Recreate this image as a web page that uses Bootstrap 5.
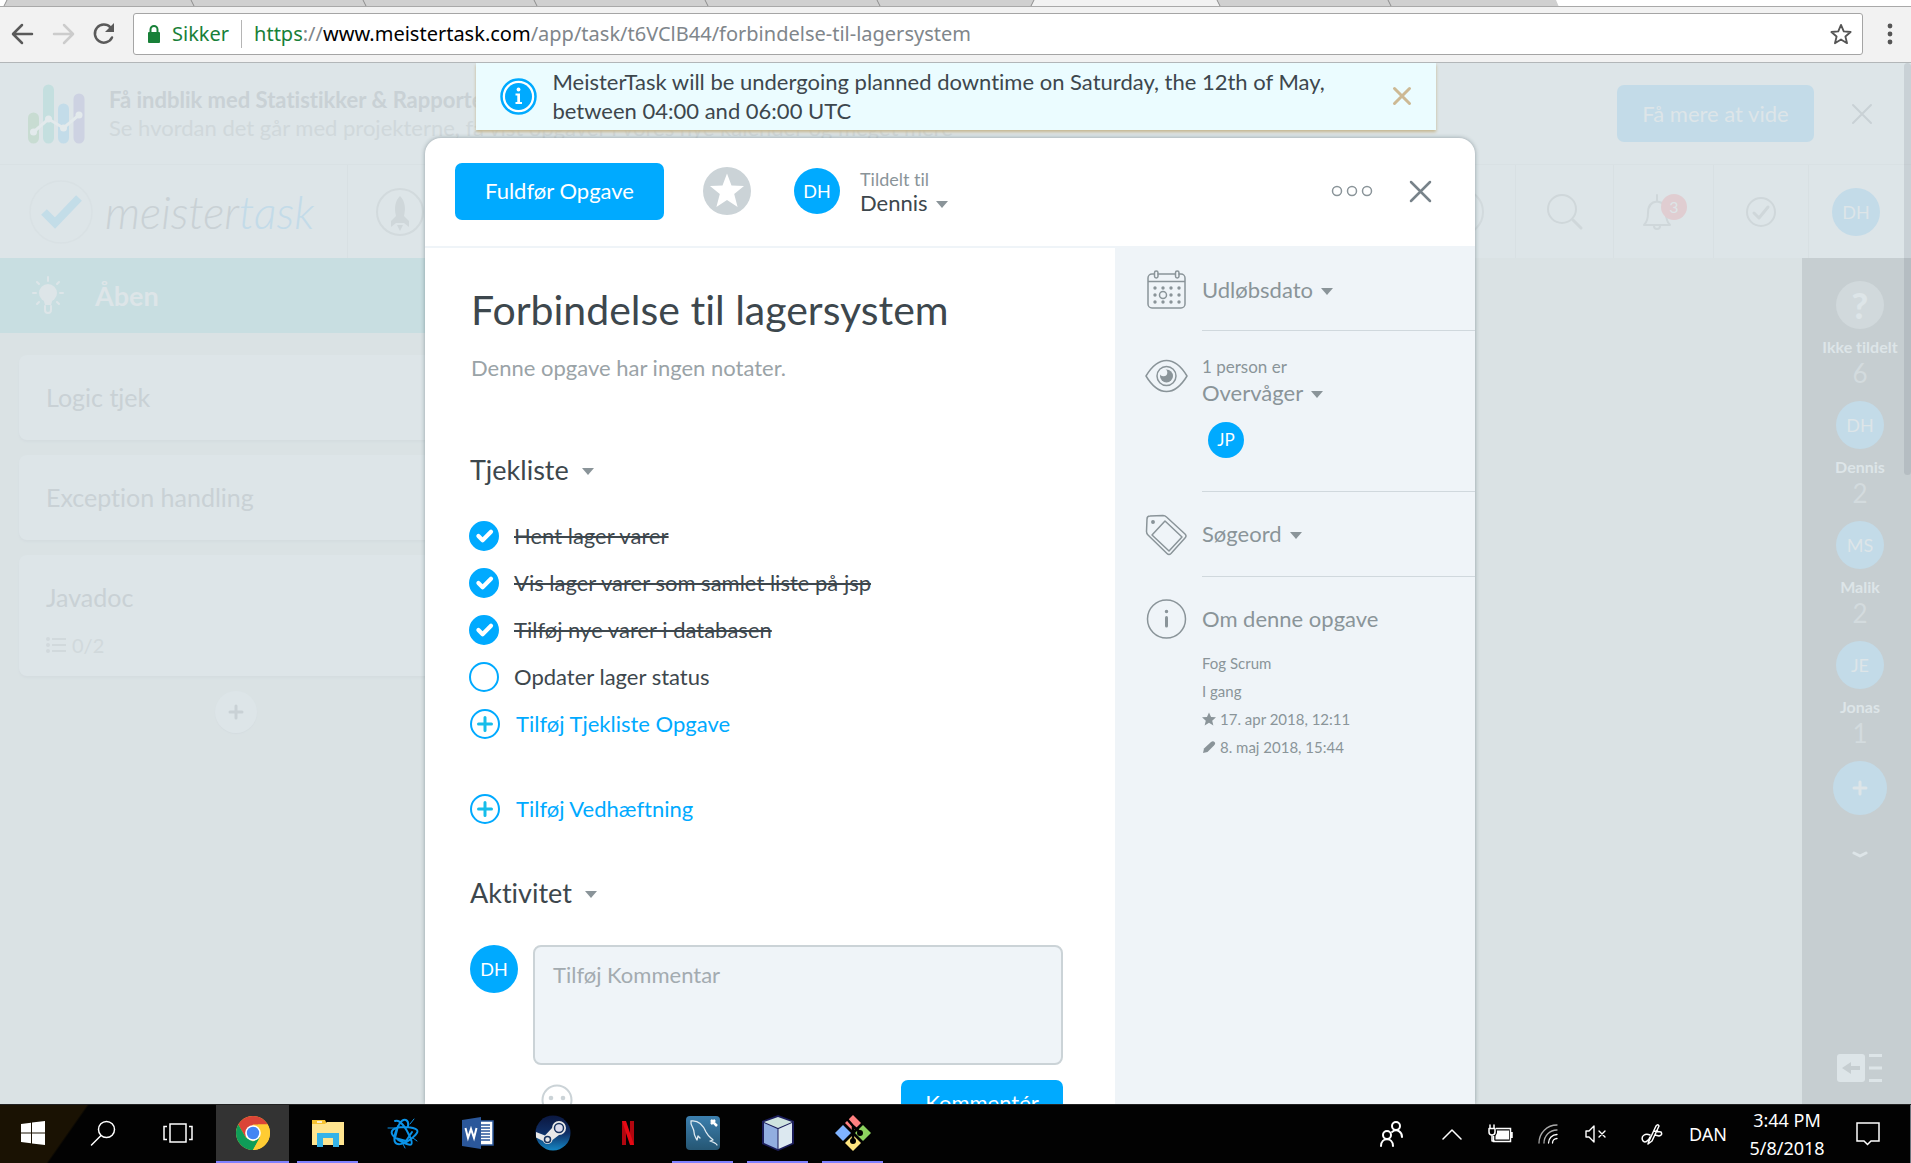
<!DOCTYPE html>
<html lang="da">
<head>
<meta charset="utf-8">
<meta name="viewport" content="width=device-width, initial-scale=1">
<title>Forbindelse til lagersystem - MeisterTask</title>
<link rel="stylesheet" href="https://cdn.jsdelivr.net/npm/bootstrap@5.3.0/dist/css/bootstrap.min.css">
<style>
:root { --blue: #00aaff; --ink: #3d474d; --mute: #8a9499; --soft: #eff4f8; --veil: #dde5e8; --ghost: #c9d1d5; --ghostblue: #c3dbe8; }
body { font-family: Lato, "Open Sans", sans-serif; font-variant-ligatures: none; color: var(--ink); font-size: 22px; line-height: 30px; }
button { font-family: inherit; }
.plain { background: none; border: 0; padding: 0; color: inherit; line-height: inherit; text-align: left; }
svg { display: block; flex: none; }
.ln { fill: none; stroke: currentColor; stroke-linecap: round; stroke-linejoin: round; }
.avatar { width: 48px; height: 48px; border-radius: 50%; background: var(--blue); color: #fff; display: flex; align-items: center; justify-content: center; flex: none; font-size: 18px; line-height: 24px; }

/* browser */
.tabstrip { height: 7px; background: #fff; border-bottom: 1px solid #a9a9a9; overflow: hidden; }
.tabstrip svg { width: 1560px; height: 7px; }
.toolbar { height: 55px; background: #f2f2f2; padding: 6px 15px 7px 10px; color: #5a5a5a; gap: 17px; }
.address { height: 42px; border: 1px solid #a5a5a5; border-radius: 3px; background: #fff; font-family: "Noto Sans", "Open Sans", sans-serif; font-size: 20px; color: #80868b; padding: 0 10px 0 14px; white-space: nowrap; }
.address .ok { color: #188038; }
.address .lock { margin-right: 12px; }
.address .pipe { width: 1px; height: 28px; background: #b5b5b5; margin: 0 12px; }

/* stage */
.stage { background: #dae2e4; border-top: 1px solid #b2b6b8; color: var(--ghost); }
.promo { height: 102px; background: var(--veil); border-bottom: 1px solid #d9e1e4; padding: 0 38px 0 28px; line-height: 28px; }
.promo .more { width: 197px; height: 57px; background: var(--ghostblue); color: var(--veil); border: 0; border-radius: 7px; margin-right: 37px; }
.promo .sub { color: #d0d8db; }
.apphead { height: 93px; background: var(--veil); color: #cfd7da; }
.wordmark { font-size: 45px; font-weight: 300; font-style: italic; line-height: 60px; width: 253px; padding-left: 11px; color: var(--ghost); }
.wordmark em { color: var(--ghostblue); }
.cell { height: 93px; border-left: 1px solid #d8e0e3; display: flex; align-items: center; justify-content: center; }
.colhead { height: 75px; width: 473px; background: #c8dee1; color: var(--veil); font-size: 27px; font-weight: 700; padding-left: 32px; gap: 30px; }
.lane { width: 472px; padding: 22px 19px; }
.task { background: #dde5e8; border-radius: 8px; box-shadow: 0 2px 2px #d5dde0; padding: 27px 27px 28px; margin-bottom: 15px; font-size: 25px; }
.task .meta { font-size: 20px; margin-top: 18px; color: #d1d9dc; }
.task.tall { padding-bottom: 16px; }
.addtask { width: 42px; height: 42px; border-radius: 50%; background: var(--veil); box-shadow: 0 1px 1px #d5dde0; }
.people { width: 109px; background: #c6ced1; color: var(--veil); padding: 23px 0 22px 7px; font-size: 16px; line-height: 26px; }
.people .avatar { background: var(--ghostblue); color: var(--veil); margin-bottom: 5px; }
.people .who { margin-bottom: 15px; }
.people .num { font-size: 26px; color: #d3dbde; }
.people .avatar.none { background: #d1d9dc; font-size: 36px; font-weight: 900; }
.people .avatar.big { width: 54px; height: 54px; }
.thumb { position: absolute; right: 0; top: 0; width: 7px; height: 412px; border-radius: 5px; background: rgba(70,80,90,.13); }

/* dialog */
.veil { position: absolute; inset: 0; padding: 75px 11px 0 0; display: flex; justify-content: center; }
.sheet { width: 1050px; background: #fff; border-radius: 16px 16px 0 0; box-shadow: 0 0 4px rgba(50,70,80,.45); color: var(--ink); overflow: hidden; align-self: stretch; }
.sheethead { height: 110px; border-bottom: 2px solid var(--soft); padding: 0 43px 2px 30px; }
.sheethead .avatar { width: 46px; height: 46px; }
.sheethead .fav { margin: 0 43px 0 39px; }
.sheethead .dots { color: var(--mute); margin-right: 36px; }
.sheethead .x { color: #78838a; }
.go { background: var(--blue); color: #fff; border: 0; border-radius: 7px; height: 57px; width: 209px; flex: none; }
.tiny { font-size: 18px; line-height: 23px; color: var(--mute); }
.who-line { line-height: 23px; display: block; }
.caret { display: inline-block; border: 6px solid transparent; border-top: 7px solid var(--mute); border-bottom: 0; margin-left: 8px; vertical-align: 3px; }
.left { padding: 38px 52px 0 44px; }
.left h1 { font-size: 41px; line-height: 48px; margin: 0 0 19px 2px; font-weight: 400; }
.note { color: #9aa3a7; margin: 0 0 72px 2px; }
.left h2 { font-size: 27px; line-height: 30px; margin: 0 0 0 1px; font-weight: 400; }
.left h2 .caret { margin-left: 13px; vertical-align: 5px; }
.checks { margin: 27px 0 0; }
.checks li { height: 47px; display: flex; align-items: center; }
.checks input.form-check-input { width: 30px; height: 30px; margin: 0 15px 0 0; border: 2px solid var(--blue); border-radius: 50%; background-size: 28px; background-position: center; }
.checks input:checked { background-color: var(--blue); }
.checks input:checked + label { text-decoration: line-through; text-decoration-thickness: 2px; }
.addrow { height: 48px; color: var(--blue); display: flex; align-items: center; gap: 16px; text-decoration: none; }
.attach { margin: 37px 0 45px; }
.comment { margin: 37px 0 0 1px; gap: 15px; }
.comment textarea { display: block; width: 100%; height: 120px; resize: none; border: 2px solid #cbd3d7; border-radius: 8px; background: var(--soft); padding: 13px 18px; line-height: 30px; }
.comment textarea::placeholder { color: #a3abb0; opacity: 1; }
.comment .tools { padding-top: 15px; }
.comment .go { width: 162px; height: 46px; }
.side { width: 360px; flex: none; background: var(--soft); margin-top: -2px; padding-top: 2px; color: var(--mute); }
.sec { display: flex; }
.sec .ico { width: 87px; padding: 22px 0 0 30px; flex: none; }
.sec .body { flex: 1; border-bottom: 1px solid #d0d8dd; padding: 27px 0; }
.sec.first .body { padding-bottom: 25px; }
.sec.watch .ico { padding-top: 28px; }
.sec.watch .body { padding: 23px 0 0; line-height: 26px; }
.sec.watch .tiny { font-size: 17px; line-height: 26px; }
.sec.last .body { border: 0; }
.about { font-size: 15px; line-height: 28px; margin-top: 15px; }
.side .avatar { width: 36px; height: 36px; font-size: 17px; margin: 16px 0 33px 6px; }

/* notification */
.notice { position: absolute; top: 0; left: 50%; transform: translateX(-50%); width: 960px; background: #ebfcff; color: var(--ink); box-shadow: 0 2px 3px #c5b68f; padding: 4px 24px 5px; line-height: 29px; gap: 16px; }
.notice .txt { width: 790px; }
.notice .x { color: #cdb994; }

/* taskbar */
.taskbar { height: 59px; background: linear-gradient(125deg, #1a1203 71px, #020202 73px); border-top: 1px solid #222; color: #fff; font-family: "Noto Sans", "Open Sans", sans-serif; font-size: 18px; line-height: 28px; }
.tb { width: 75px; padding: 0 7px; height: 58px; border: 0; background: none; color: #fff; }
.tb > span { height: 58px; display: flex; align-items: center; justify-content: center; border-bottom: 2px solid transparent; }
.tb.open > span { border-color: #8080ff; }
.tb.now { padding: 0 1px; }
.tb.now > span { background: #333; }
.tb.w-a { width: 65px; padding: 0; } .tb.w-b { width: 74px; padding: 0; } .tb.w-c { width: 76px; padding: 0; }
.tray { display: flex; align-items: center; justify-content: center; flex: none; height: 58px; }
.t-s { width: 36px; } .t-m { width: 60px; } .t-l { width: 76px; } .t-clock { width: 122px; }
.t-note { width: 40px; margin-right: 22px; }
</style>
<script src="https://cdn.jsdelivr.net/npm/bootstrap@5.3.0/dist/js/bootstrap.bundle.min.js"></script>
</head>
<body class="vh-100 overflow-hidden d-flex flex-column">

<header class="flex-shrink-0">
  <div class="tabstrip">
    <svg viewBox="0 0 1560 7">
      <path fill="#d0d0d0" d="M7 0H1034L1031 7H4zM1217 0H1556L1559 7H1220z"/>
      <path fill="#f2f2f2" d="M1034 0H1217L1220 7H1031z"/>
      <path fill="none" stroke="#8d8d8d" d="M7 0L4 6M191 0L194 6M363 0L366 6M534 0L537 6M705 0L708 6M877 0L880 6M1034 0L1031 6M1217 0L1220 6M1388 0L1391 6"/>
    </svg>
  </div>
  <div class="toolbar d-flex align-items-center">
    <button class="plain" aria-label="Tilbage"><svg width="24" height="24" viewBox="0 0 24 24" class="ln" stroke-width="2.5"><path d="M22 12H4M12 3L3 12L12 21"/></svg></button>
    <button class="plain" aria-label="Frem" style="color:#ccc"><svg width="24" height="24" viewBox="0 0 24 24" class="ln" stroke-width="2.5"><path d="M3 12H21M13 3L22 12L13 21"/></svg></button>
    <button class="plain" aria-label="Opdater"><svg width="24" height="24" viewBox="0 0 24 24"><path class="ln" stroke-width="2.5" d="M20 15.500A9 9 0 1 1 18.500 5.500"/><path fill="currentColor" d="M22 1V10H13z"/></svg></button>
    <div class="address d-flex align-items-center flex-grow-1">
      <svg class="lock" width="12" height="18" viewBox="0 0 12 18"><rect y="7" width="12" height="11" rx="1" fill="#188038"/><path d="M2.500 8V4.500a3.500 3.500 0 0 1 7 0V8" fill="none" stroke="#188038" stroke-width="2"/></svg>
      <span class="ok">Sikker</span><span class="pipe"></span>
      <span class="flex-grow-1"><span class="ok">https</span>://<span class="text-black">www.meistertask.com</span>/app/task/t6VClB44/forbindelse-til-lagersystem</span>
      <button class="plain" aria-label="Bogmærk"><svg width="22" height="22" viewBox="0 0 24 24" class="ln" stroke-width="2" style="color:#555"><path d="M12 2L15 9.200L22.500 9.800L16.800 14.700L18.600 22L12 18L5.400 22L7.200 14.700L1.500 9.800L9 9.200z"/></svg></button>
    </div>
    <button class="plain" aria-label="Menu"><svg width="16" height="24" viewBox="0 0 16 24" fill="#555"><circle cx="10" cy="4" r="2.400"/><circle cx="10" cy="12" r="2.400"/><circle cx="10" cy="20" r="2.400"/></svg></button>
  </div>
</header>

<div class="stage flex-grow-1 position-relative overflow-hidden d-flex flex-column">
  <div class="promo d-flex align-items-center flex-shrink-0">
    <svg width="57" height="60" viewBox="0 0 57 60"><g stroke-width="11" stroke-linecap="round"><path stroke="#c8dcd2" d="M5.500 34V54"/><path stroke="#c4dfdf" d="M20.500 6V54"/><path stroke="#c3dce9" d="M35.500 25V54"/><path stroke="#cdd2e2" d="M51 15V54"/></g><path fill="none" stroke="#e3eaec" stroke-width="3" d="M5.500 48L20.500 35L35.500 44L51 31"/><g fill="#e3eaec"><circle cx="5.500" cy="48" r="3.500"/><circle cx="20.500" cy="35" r="3.500"/><circle cx="35.500" cy="44" r="3.500"/><circle cx="51" cy="31" r="3.500"/></g></svg>
    <div class="ms-4 flex-grow-1 text-nowrap"><b>Få indblik med Statistikker &amp; Rapporter</b><br><span class="sub">Se hvordan det går med projekterne, få vist opgaver i vores nye kalender og meget mere</span></div>
    <button class="more">Få mere at vide</button>
    <button class="plain" aria-label="Luk banner"><svg width="22" height="22" viewBox="0 0 22 22" class="ln" stroke-width="2"><path d="M2 2L20 20M20 2L2 20"/></svg></button>
  </div>

  <div class="apphead d-flex align-items-center flex-shrink-0">
    <svg class="ms-4" width="70" height="80" viewBox="0 0 70 80"><circle cx="37" cy="40" r="31" fill="none" stroke="#d9e1e4" stroke-width="1.500"/><path fill="none" stroke="#c3dde8" stroke-width="8" d="M20 40L31 51L55 26"/></svg>
    <span class="wordmark">meister<em>task</em></span>
    <div class="cell px-4 justify-content-start flex-grow-1"><svg width="56" height="48" viewBox="0 0 56 48"><circle cx="28" cy="24" r="23" fill="none" stroke="#d2dadd" stroke-width="2"/><path fill="#cfd7da" d="M28 8c5 5 6 12 4 20l5 5v6l-5-4h-8l-5 4v-6l5-5c-2-8-1-15 4-20zM25 37h6l-3 6z"/></svg></div>
    <svg width="50" height="50" viewBox="0 0 50 50" class="me-4"><circle cx="19" cy="25" r="23" fill="none" stroke="#d2dadd" stroke-width="2"/></svg>
    <div class="cell" style="width:98px"><svg width="38" height="38" viewBox="0 0 38 38" class="ln" stroke-width="2"><circle cx="16" cy="16" r="14"/><path stroke-width="3" d="M27 27L35 35"/></svg></div>
    <div class="cell" style="width:100px"><svg width="46" height="40" viewBox="0 0 46 40"><path class="ln" stroke-width="2" d="M3 33H29C26 30 25 27 25 21C25 14 22 10 16 9.500C10 10 7 14 7 21C7 27 6 30 3 33zM16 9V3M13 34a3 3 0 0 0 6 0"/><circle cx="33" cy="15" r="13" fill="#e0cdd1"/><text x="33" y="21" font-size="16" text-anchor="middle" fill="#dde5e8">3</text></svg></div>
    <div class="cell" style="width:95px"><svg width="32" height="32" viewBox="0 0 32 32" class="ln" stroke-width="2"><circle cx="16" cy="16" r="14"/><path stroke-width="3" d="M9 17L14 22L23 11"/></svg></div>
    <div class="cell" style="width:103px"><span class="avatar me-2" style="background:var(--ghostblue);color:var(--veil)">DH</span></div>
  </div>

  <div class="d-flex flex-grow-1">
    <main class="flex-grow-1">
      <div class="colhead d-flex align-items-center">
        <svg width="33" height="40" viewBox="0 0 33 40"><circle cx="16" cy="17" r="9" fill="currentColor"/><path fill="currentColor" d="M11 22h10l-2 7h-6z"/><path class="ln" stroke-width="2" d="M13 30V34a3 3 0 0 0 6 0V30M16 1V5M1 17H4M28 17H31M5 6L7 8M27 6L25 8M5 28L7 26M27 28L25 26"/></svg>
        <span>Åben</span>
      </div>
      <div class="lane">
        <div class="task">Logic tjek</div>
        <div class="task">Exception handling</div>
        <div class="task tall">Javadoc
          <div class="meta d-flex align-items-center"><svg class="me-1" width="22" height="18" viewBox="0 0 22 18" fill="currentColor"><circle cx="2" cy="3" r="2"/><circle cx="2" cy="9" r="2"/><circle cx="2" cy="15" r="2"/><path d="M6 2H20V4H6zM6 8H20V10H6zM6 14H20V16H6z"/></svg>0/2</div>
        </div>
        <button class="plain addtask mx-auto d-flex align-items-center justify-content-center" aria-label="Ny opgave"><svg width="16" height="16" viewBox="0 0 16 16" class="ln" stroke-width="3"><path d="M8 2V14M2 8H14"/></svg></button>
      </div>
    </main>
    <aside class="people d-flex flex-column align-items-center">
      <div class="who d-flex flex-column align-items-center"><span class="avatar none">?</span><b>Ikke tildelt</b><span class="num">6</span></div>
      <div class="who d-flex flex-column align-items-center"><span class="avatar">DH</span><b>Dennis</b><span class="num">2</span></div>
      <div class="who d-flex flex-column align-items-center"><span class="avatar">MS</span><b>Malik</b><span class="num">2</span></div>
      <div class="who d-flex flex-column align-items-center"><span class="avatar">JE</span><b>Jonas</b><span class="num">1</span></div>
      <button class="plain avatar big" aria-label="Tilføj medlem"><svg width="16" height="16" viewBox="0 0 16 16" class="ln" stroke-width="3"><path d="M8 2V14M2 8H14"/></svg></button>
      <svg class="mt-4" width="16" height="20" viewBox="0 0 16 20"><path class="ln" stroke-width="3" d="M2 9L8 12L14 9"/></svg>
      <svg class="mt-auto" width="46" height="28" viewBox="0 0 46 28" fill="currentColor"><rect width="28" height="28" rx="3"/><path d="M32 0H45V3H32zM32 12.500H45V15.500H32zM32 25H45V28H32z"/><path fill="#c6ced1" d="M5 14L14 8V12H23V16H14V20z"/></svg>
    </aside>
  </div>
  <div class="thumb"></div>

  <div class="veil">
    <section class="sheet d-flex flex-column" role="dialog" aria-label="Opgave">
      <div class="sheethead d-flex align-items-center flex-shrink-0">
        <button class="go">Fuldfør Opgave</button>
        <button class="plain fav" aria-label="Favorit"><svg width="48" height="48" viewBox="0 0 48 48"><circle cx="24" cy="24" r="24" fill="#cbd3d7"/><path fill="#fff" d="M24 6.500L28.500 18.500L41 19L31.200 27L34.600 40L24 33L13.400 40L16.800 27L7 19L19.500 18.500z"/></svg></button>
        <span class="avatar">DH</span>
        <div class="ms-3 ps-1 flex-grow-1"><div class="tiny">Tildelt til</div><button class="plain who-line">Dennis<span class="caret"></span></button></div>
        <button class="plain dots" aria-label="Mere"><svg width="42" height="12" viewBox="0 0 42 12" class="ln" stroke-width="1.500"><circle cx="6" cy="6" r="4.500"/><circle cx="21" cy="6" r="4.500"/><circle cx="36" cy="6" r="4.500"/></svg></button>
        <button class="plain x" aria-label="Luk"><svg width="23" height="23" viewBox="0 0 23 23" class="ln" stroke-width="2.500"><path d="M2 2L21 21M21 2L2 21"/></svg></button>
      </div>
      <div class="d-flex flex-grow-1">
        <div class="left flex-grow-1">
          <h1>Forbindelse til lagersystem</h1>
          <p class="note">Denne opgave har ingen notater.</p>
          <h2>Tjekliste<span class="caret"></span></h2>
          <ul class="checks list-unstyled">
            <li><input class="form-check-input" type="checkbox" id="c1" checked><label for="c1">Hent lager varer</label></li>
            <li><input class="form-check-input" type="checkbox" id="c2" checked><label for="c2">Vis lager varer som samlet liste på jsp</label></li>
            <li><input class="form-check-input" type="checkbox" id="c3" checked><label for="c3">Tilføj nye varer i databasen</label></li>
            <li><input class="form-check-input" type="checkbox" id="c4"><label for="c4">Opdater lager status</label></li>
          </ul>
          <a class="addrow" href="#"><svg width="31" height="30" viewBox="0 0 31 30"><circle cx="16" cy="15" r="14" fill="none" stroke="#00aaff" stroke-width="2"/><path d="M16 8.500V21.500M9.500 15H22.500" stroke="#15bdea" stroke-width="3" stroke-linecap="round"/></svg>Tilføj Tjekliste Opgave</a>
          <a class="addrow attach" href="#"><svg width="31" height="30" viewBox="0 0 31 30"><circle cx="16" cy="15" r="14" fill="none" stroke="#00aaff" stroke-width="2"/><path d="M16 8.500V21.500M9.500 15H22.500" stroke="#15bdea" stroke-width="3" stroke-linecap="round"/></svg>Tilføj Vedhæftning</a>
          <h2>Aktivitet<span class="caret"></span></h2>
          <div class="comment d-flex">
            <span class="avatar">DH</span>
            <div class="flex-grow-1">
              <textarea placeholder="Tilføj Kommentar" aria-label="Tilføj Kommentar"></textarea>
              <div class="tools d-flex justify-content-between align-items-start">
                <button class="plain mt-1 ms-2" aria-label="Emoji"><svg width="32" height="32" viewBox="0 0 32 32"><circle cx="16" cy="16" r="14.500" fill="none" stroke="#cbd3d7" stroke-width="2"/><circle cx="10" cy="14" r="2.300" fill="#cbd3d7"/><circle cx="22" cy="14" r="2.300" fill="#cbd3d7"/><path d="M9 21q7 5 14 0" fill="none" stroke="#cbd3d7" stroke-width="2"/></svg></button>
                <button class="go">Kommentér</button>
              </div>
            </div>
          </div>
        </div>
        <aside class="side">
          <div class="sec first">
            <div class="ico"><svg width="42" height="40" viewBox="0 0 42 40" class="ln" stroke-width="1.500"><path d="M9 4H7a4 4 0 0 0-4 4V34a4 4 0 0 0 4 4H36a4 4 0 0 0 4-4V8a4 4 0 0 0-4-4H34M13 4H30M3 11.500H40"/><rect x="9.500" y="1" width="3.500" height="7" rx="1.700"/><rect x="30.500" y="1" width="3.500" height="7" rx="1.700"/><circle cx="18" cy="25" r="3.500"/><g fill="currentColor" stroke="none"><circle cx="10" cy="18" r="1.700"/><circle cx="18" cy="18" r="1.700"/><circle cx="26" cy="18" r="1.700"/><circle cx="34" cy="18" r="1.700"/><circle cx="10" cy="25" r="1.700"/><circle cx="26" cy="25" r="1.700"/><circle cx="34" cy="25" r="1.700"/><circle cx="10" cy="32" r="1.700"/><circle cx="18" cy="32" r="1.700"/><circle cx="26" cy="32" r="1.700"/><circle cx="34" cy="32" r="1.700"/></g></svg></div>
            <div class="body"><button class="plain d-block">Udløbsdato<span class="caret"></span></button></div>
          </div>
          <div class="sec watch">
            <div class="ico"><svg width="43" height="34" viewBox="0 0 43 34" class="ln" stroke-width="1.500"><path d="M1 17C7 7 13 1.500 21.500 1.500S36 7 42 17C36 27 30 32.500 21.500 32.500S7 27 1 17z"/><circle cx="21.500" cy="17" r="9.500"/><circle cx="21.500" cy="17" r="6.500" fill="currentColor" stroke="none"/><circle cx="18.500" cy="13.500" r="3.800" fill="#eff4f8" stroke="none"/></svg></div>
            <div class="body"><div class="tiny">1 person er</div><button class="plain d-block">Overvåger<span class="caret"></span></button><span class="avatar">JP</span></div>
          </div>
          <div class="sec">
            <div class="ico"><svg width="42" height="42" viewBox="0 0 42 42" class="ln" stroke-width="1.500"><path d="M5 2L18 1.500Q20 1.500 21.500 3L40 20Q42 22 40 24L26 39.500Q24 41.500 22 39.500L3 21Q1.500 19.500 1.500 17.500L2 5Q2 2 5 2z"/><path d="M20 7L37 23L24 37L7 21z"/><circle cx="8" cy="8" r="1.200" fill="currentColor"/></svg></div>
            <div class="body"><button class="plain d-block">Søgeord<span class="caret"></span></button></div>
          </div>
          <div class="sec last">
            <div class="ico"><svg width="42" height="40" viewBox="0 0 42 40" class="ln" stroke-width="1.500"><circle cx="21.500" cy="20" r="19"/><path stroke-width="3" d="M21.500 18.500V27"/><circle cx="21.500" cy="12.500" r="1" fill="currentColor"/></svg></div>
            <div class="body">Om denne opgave
              <div class="about">
                <div>Fog Scrum</div>
                <div>I gang</div>
                <div class="d-flex align-items-center"><svg class="me-1" width="14" height="14" viewBox="0 0 24 24" fill="currentColor"><path d="M12 1L15.500 8.500L24 9.200L17.500 14.800L19.500 23L12 18.500L4.500 23L6.500 14.800L0 9.200L8.500 8.500z"/></svg>17. apr 2018, 12:11</div>
                <div class="d-flex align-items-center"><svg class="me-1" width="14" height="14" viewBox="0 0 14 14" fill="currentColor"><path d="M1 13L2 8.500L9 2Q11 .500 12.500 2T12 5.500L5.500 12z"/></svg>8. maj 2018, 15:44</div>
              </div>
            </div>
          </div>
        </aside>
      </div>
    </section>
  </div>

  <div class="notice d-flex align-items-center" role="status">
    <svg width="37" height="37" viewBox="0 0 37 37"><circle cx="18.500" cy="18.500" r="17" fill="#fff" stroke="#00aaff" stroke-width="2.500"/><circle cx="18.500" cy="18.500" r="13.500" fill="#00aaff"/><circle cx="18.500" cy="11.500" r="1.900" fill="#fff"/><path fill="#fff" d="M15.500 15.500H20V24H22V26H15.500V24H17.300V17.500H15.500z"/></svg>
    <div class="txt">MeisterTask will be undergoing planned downtime on Saturday, the 12th of May, between 04:00 and 06:00 UTC</div>
    <button class="plain ms-auto x" aria-label="Luk besked"><svg width="20" height="20" viewBox="0 0 20 20" class="ln" stroke-width="3"><path d="M2.500 2.500L17.500 17.500M17.500 2.500L2.500 17.500"/></svg></button>
  </div>
</div>

<footer class="taskbar d-flex flex-shrink-0">
  <button class="tb w-a" aria-label="Start"><span><svg width="24" height="24" viewBox="0 0 24 24" fill="#fff"><path d="M0 3L10 1.700V11.500H0zM11 1.500L24 0V11.500H11zM0 12.500H10V22.300L0 21zM11 12.500H24V24L11 22.500z"/></svg></span></button>
  <button class="tb w-c" aria-label="Søg"><span><svg width="26" height="26" viewBox="0 0 26 26" class="ln" stroke-width="1.500"><circle cx="16.500" cy="9.500" r="8"/><path d="M11 15.500L1.500 25"/></svg></span></button>
  <button class="tb w-b" aria-label="Opgavevisning"><span><svg width="30" height="20" viewBox="0 0 30 20" fill="none" stroke="#fff" stroke-width="1.500"><path d="M7 1H23V19H7zM4 3.500H1V16.500H4M26 3.500H29V16.500H26"/></svg></span></button>
  <button class="tb now open" aria-label="Chrome"><span><svg width="34" height="34" viewBox="0 0 34 34"><circle cx="17" cy="17" r="17" fill="#fc3"/><path fill="#db4437" d="M2.300 8.500A17 17 0 0 1 31.700 8.500H17L9.500 21.300z"/><path fill="#0f9d58" d="M2.300 8.500L9.640 21.250L17 25.500L24 21L17 34A17 17 0 0 1 2.300 8.500z"/><path fill="#fc3" d="M31.700 8.500A17 17 0 0 1 17 34L24.300 21.300L22 10V8.500z"/><circle cx="17" cy="17" r="7.800" fill="#fff"/><circle cx="17" cy="17" r="6.200" fill="#4285f4"/></svg></span></button>
  <button class="tb open" aria-label="Stifinder"><span><svg width="32" height="28" viewBox="0 0 32 28"><path fill="#f7c331" d="M0 1H13L15 5H0z"/><path fill="#ffe58f" d="M0 5H13L15 3H32V26H0z"/><path fill="#35b3e8" d="M5 14H27V28H21V19H11V28H5z"/><path stroke="#fff" stroke-width="1.500" d="M5 3H10"/></svg></span></button>
  <button class="tb" aria-label="Battle.net"><span><svg width="32" height="32" viewBox="0 0 32 32" class="ln" stroke-width="2" style="color:#0b93e8"><path d="M8 4C13 2 19 11 23 20S24 29 17 26S3 18 5 14S18 9 26 11S30 17 24 22S10 29 8 25S9 12 13 6S22 3 21 9M11 9L8 21L19 24L25 15"/><path stroke-width="1" d="M1 11H8M27 2L23 7M18 31L16 27M30 24L26 21"/></svg></span></button>
  <button class="tb" aria-label="Word"><span><svg width="32" height="32" viewBox="0 0 32 32"><rect x="15" y="4" width="16" height="24" fill="#fff" stroke="#2b579a" stroke-width="1.500"/><path stroke="#2b579a" stroke-width="1.500" d="M19 8H28M19 11H28M19 14H28M19 17H28M19 20H28M19 23H28"/><path fill="#2b579a" d="M0 3L19 0V32L0 29z"/><path fill="none" stroke="#fff" stroke-width="2" d="M3.500 11L6 21L9 12L12 21L14.500 11"/></svg></span></button>
  <button class="tb" aria-label="Steam"><span><svg width="36" height="36" viewBox="0 0 36 36"><defs><linearGradient id="st" x2="0" y2="1"><stop offset="0" stop-color="#0b1740"/><stop offset=".5" stop-color="#0f2f66"/><stop offset="1" stop-color="#1587c4"/></linearGradient></defs><circle cx="18" cy="18" r="17.500" fill="url(#st)"/><path fill="#e8e8e8" d="M1 17L10 20.500L17 13A7 7 0 1 1 24 20L17.500 25A5 5 0 0 1 8 26L1 22.500z"/><circle cx="24" cy="13" r="4.500" fill="#dde" stroke="#17335f" stroke-width="1.500"/><circle cx="12.500" cy="24.500" r="3" fill="none" stroke="#17335f" stroke-width="1.500"/></svg></span></button>
  <button class="tb" aria-label="Netflix"><span><svg width="12" height="24" viewBox="0 0 12 24"><path fill="#b1060f" d="M0 0H4V24H0zM8 0H12V24H8z"/><path fill="#e50914" d="M0 0H4L12 24H8z"/></svg></span></button>
  <button class="tb open" aria-label="MySQL Workbench"><span><svg width="34" height="34" viewBox="0 0 34 34"><defs><linearGradient id="my" x2="0" y2="1"><stop offset="0" stop-color="#3c7fae"/><stop offset="1" stop-color="#255673"/></linearGradient></defs><rect width="34" height="34" rx="4" fill="url(#my)"/><path class="ln" stroke-width="1.300" style="color:#dfeaf1" d="M5 5C12 4 17 9 20 16C22 20 25 22 27 24L24 25C27 26 30 27 31 29M5 5C4 9 8 12 8 16C8 20 10 22 11 24L12 20L14 22"/><path stroke="#fff" stroke-width="2.500" d="M25 4L31 10M25 8L29 4"/></svg></span></button>
  <button class="tb open" aria-label="NetBeans"><span><svg width="34" height="36" viewBox="0 0 34 36"><path fill="#1b1d5a" d="M17 0L33 6V29L17 36L1 29V6z"/><path fill="#cfe3df" d="M17 2L31 7L17 13L3 7z"/><path fill="#92aee0" d="M3 8L16.500 14V34L3 28z"/><path fill="#dce8f0" d="M31 8L17.500 14V34L31 28z"/></svg></span></button>
  <button class="tb open" aria-label="Git"><span><svg width="36" height="36" viewBox="0 0 36 36"><path fill="#ff8080" d="M18 0L26 8L18 16L10 8z"/><path fill="#80b3ff" d="M8 10L16 18L8 26L0 18z"/><path fill="#8dd35f" d="M28 10L36 18L28 26L20 18z"/><path fill="#ffe680" d="M18 20L26 28L18 36L10 28z"/><path fill="none" stroke="#000" stroke-width="2.500" d="M12 4L18 11V26M18 11L26 18"/><circle cx="18" cy="26" r="3"/><circle cx="25" cy="18" r="3"/></svg></span></button>

  <div class="tray t-m ms-auto"><svg width="24" height="26" viewBox="0 0 24 26" class="ln" stroke-width="2"><circle cx="16" cy="5" r="4"/><circle cx="7" cy="14" r="4"/><path d="M1 25C1 16 13 16 13 25M12 11C17 7 22 11 22 16"/></svg></div>
  <div class="tray t-m"><svg width="20" height="12" viewBox="0 0 20 12" class="ln" stroke-width="1.500"><path d="M1 11L10 2L19 11"/></svg></div>
  <div class="tray t-s"><svg width="25" height="20" viewBox="0 0 25 20"><path fill="none" stroke="#fff" stroke-width="1.500" d="M8 4.500H22.500V17.500H5.500V12M24 8V14"/><path fill="#fff" d="M9 6.500H21V15.500H7.500V12L9 9z"/><path class="ln" stroke-width="1.500" d="M2 1V4M6 1V4M1 4.500H7V8a3 3 0 0 1-6 0zM4 11V17H6"/></svg></div>
  <div class="tray t-m"><svg width="20" height="20" viewBox="0 0 20 20" class="ln" stroke-width="1.300"><path style="color:#aaa" d="M1 19A18 18 0 0 1 19 1M6 19A13 13 0 0 1 19 6"/><path d="M10.500 19A8.500 8.500 0 0 1 19 10.500M14.500 19A4.500 4.500 0 0 1 19 14.500"/></svg></div>
  <div class="tray t-s"><svg width="22" height="20" viewBox="0 0 22 20" class="ln" stroke-width="1.400"><path d="M1 7H4L9 2V18L4 13H1zM14 7L20 13M20 7L14 13"/></svg></div>
  <div class="tray t-l"><svg width="22" height="22" viewBox="0 0 22 22" class="ln" stroke-width="1.500"><path d="M8 18L15 3Q17 .500 18 3L11 18L7 21zM9 12C4 10 0 13 1.500 17S8 18 9 14M13 8L20 9Q22 12 18 13L14 12"/></svg></div>
  <div class="tray t-s">DAN</div>
  <div class="tray t-clock flex-column">
    <span>3:44 PM</span><span>5/8/2018</span>
  </div>
  <div class="tray t-note"><svg width="24" height="24" viewBox="0 0 24 24" fill="none" stroke="#fff" stroke-width="1.500"><path d="M1 1H23V19H15L11.500 22.500L8 19H1z"/></svg></div>
  <div class="border-start border-secondary h-100"></div>
</footer>
</body>
</html>
